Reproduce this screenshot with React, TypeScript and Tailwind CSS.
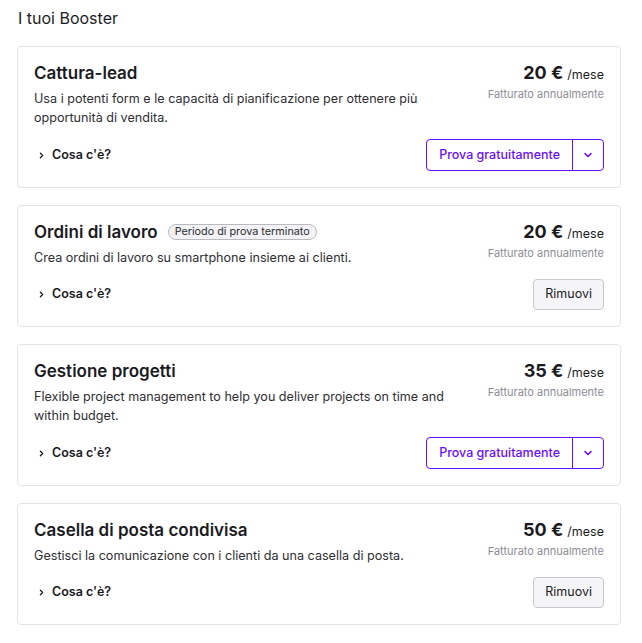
import React from 'react';
import { ChevronRight, ChevronDown } from 'lucide-react';

interface Booster {
  id: string;
  name: string;
  description: string;
  price: number;
  badge?: string;
  active: boolean;
}

const boosters: Booster[] = [
  {
    id: 'lead',
    name: 'Cattura-lead',
    description:
      'Usa i potenti form e le capacità di pianificazione per ottenere più opportunità di vendita.',
    price: 20,
    active: false,
  },
  {
    id: 'orders',
    name: 'Ordini di lavoro',
    description: 'Crea ordini di lavoro su smartphone insieme ai clienti.',
    price: 20,
    badge: 'Periodo di prova terminato',
    active: true,
  },
  {
    id: 'projects',
    name: 'Gestione progetti',
    description:
      'Flexible project management to help you deliver projects on time and within budget.',
    price: 35,
    active: false,
  },
  {
    id: 'inbox',
    name: 'Casella di posta condivisa',
    description: 'Gestisci la comunicazione con i clienti da una casella di posta.',
    price: 50,
    active: true,
  },
];

const BoosterCard: React.FC<{ booster: Booster }> = ({ booster }) => (
  <div className="bg-white border border-[#e3e3e6] rounded-[4px] p-4">
    <div className="flex justify-between gap-6">
      <div className="flex-1 min-w-0">
        <div className="flex items-center">
          <h3 className="text-[17px] leading-5 font-semibold text-[#1b1b1f]">{booster.name}</h3>
          {booster.badge && (
            <span className="ml-2.5 h-4 px-[6px] flex items-center rounded-full border border-[#b9b9c0] bg-[#f3f3f5] text-[10.8px] leading-none text-[#2c2c33]">
              {booster.badge}
            </span>
          )}
        </div>
        <p className="mt-1.5 text-[12.6px] leading-[19px] text-[#2e2e33]">{booster.description}</p>
      </div>
      <div className="shrink-0 text-right">
        <div className="leading-5 text-[#1b1b1f]">
          <span className="text-lg leading-5 font-bold">{booster.price} €</span>
          <span className="text-[12.5px] leading-5 ml-1">/mese</span>
        </div>
        <div className="mt-px text-[11px] leading-4 text-[#8d8d96]">Fatturato annualmente</div>
      </div>
    </div>
    <div className="mt-3 flex items-center justify-between">
      <button className="flex items-center pl-[3px] text-[12.5px] font-semibold text-[#1b1b1f]">
        <ChevronRight size={9} strokeWidth={3.4} className="mr-[6px]" />
        Cosa c'è?
      </button>
      {booster.active ? (
        <button className="h-[31px] px-[11px] rounded-[4px] border border-[#c8c8cf] bg-[#f5f5f7] text-[12.5px] text-[#1b1b1f]">
          Rimuovi
        </button>
      ) : (
        <div className="flex h-8 rounded-[4px] border border-[#6a0dff] text-[#6a0dff]">
          <button className="px-3 text-[12.5px] font-medium">Prova gratuitamente</button>
          <button className="w-[31px] flex items-center justify-center border-l border-[#6a0dff]">
            <ChevronDown size={12} strokeWidth={3.2} />
          </button>
        </div>
      )}
    </div>
  </div>
);

export default function App() {
  return (
    <div
      className="min-h-screen bg-white pt-[6px] pl-[17px] pr-[21px]"
      style={{ fontFamily: 'Inter, "Noto Sans", sans-serif' }}
    >
      <h2 className="text-base leading-6 text-[#1b1b1f] mb-4 pl-px">I tuoi Booster</h2>
      <div className="flex flex-col gap-[17px]">
        {boosters.map((b) => (
          <BoosterCard key={b.id} booster={b} />
        ))}
      </div>
    </div>
  );
}
